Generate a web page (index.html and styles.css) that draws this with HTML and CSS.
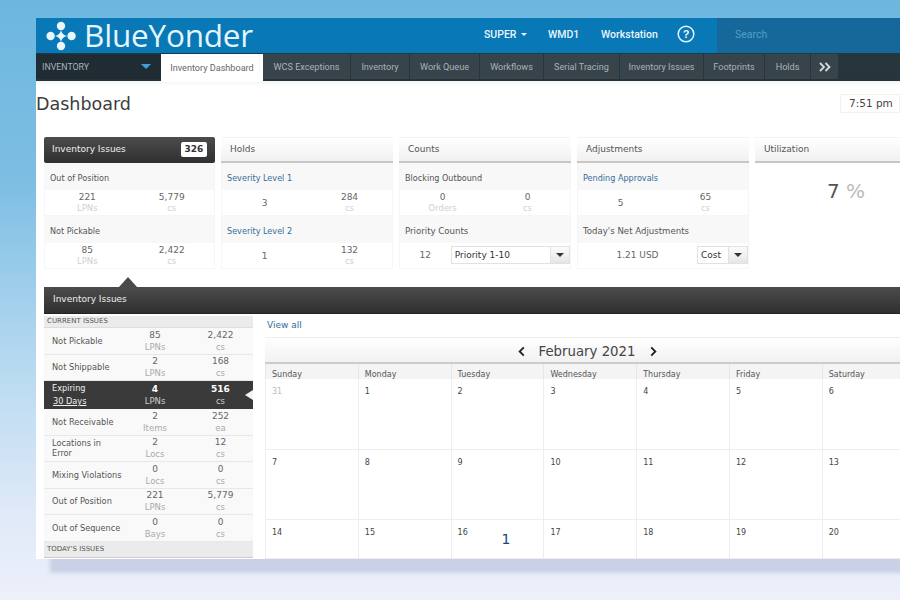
FILE: index.html
```html
<!DOCTYPE html>
<html lang="en">

<head>
    <meta charset="UTF-8" />
    <title>Blue Yonder - Dashboard</title>
    <link rel="stylesheet" href="styles.css">
</head>

<body>
    <div class="app">
        <div class="topbar">
            <svg class="logo-mark" width="30" height="30" viewBox="0 0 30 30">
                <circle cx="15" cy="5" r="4.2" />
                <circle cx="4.6" cy="15" r="4.2" />
                <circle cx="25.6" cy="15" r="4.2" />
                <circle cx="15" cy="25" r="4.2" />
                <path d="M15 9 Q16 14 21 15 Q16 16 15 21 Q14 16 9 15 Q14 14 15 9Z" />
            </svg>
            <span class="logo-text">BlueYonder</span>
            <div class="top-links">
                <span class="top-link top-super">SUPER <i class="caret"></i></span>
                <span class="top-link top-wmd">WMD1</span>
                <span class="top-link top-station">Workstation</span>
                <svg class="help" width="18" height="18" viewBox="0 0 18 18">
                    <circle cx="9" cy="9" r="7.8" />
                    <text x="9" y="13" text-anchor="middle">?</text>
                </svg>
            </div>
            <div class="search">Search</div>
        </div>

        <div class="nav">
            <div class="nav-select">INVENTORY <i class="nav-caret"></i></div>
            <div class="tab tab-active w-dash">Inventory Dashboard</div>
            <div class="tab w-wcs">WCS Exceptions</div>
            <div class="tab w-inv">Inventory</div>
            <div class="tab w-queue">Work Queue</div>
            <div class="tab w-flow">Workflows</div>
            <div class="tab w-serial">Serial Tracing</div>
            <div class="tab w-issues">Inventory Issues</div>
            <div class="tab w-foot">Footprints</div>
            <div class="tab w-holds">Holds</div>
            <div class="tab tab-more w-more">
                <svg width="12" height="10" viewBox="0 0 12 10">
                    <path d="M1 1l4 4-4 4M6.500 1l4 4-4 4" />
                </svg>
            </div>
        </div>

        <div class="title-row">
            <h1>Dashboard</h1>
            <div class="clock">7:51 pm</div>
        </div>

        <div class="tiles">
            <div class="tile">
                <div class="tile-head tile-head-dark">Inventory Issues <span class="count">326</span></div>
                <div class="tile-label">Out of Position</div>
                <div class="tile-values">
                    <div><b>221</b><small>LPNs</small></div>
                    <div><b>5,779</b><small>cs</small></div>
                </div>
                <div class="tile-label">Not Pickable</div>
                <div class="tile-values">
                    <div><b>85</b><small>LPNs</small></div>
                    <div><b>2,422</b><small>cs</small></div>
                </div>
            </div>
            <div class="tile">
                <div class="tile-head">Holds</div>
                <div class="tile-label link">Severity Level 1</div>
                <div class="tile-values">
                    <div><b>3</b></div>
                    <div><b>284</b><small>cs</small></div>
                </div>
                <div class="tile-label link">Severity Level 2</div>
                <div class="tile-values">
                    <div><b>1</b></div>
                    <div><b>132</b><small>cs</small></div>
                </div>
            </div>
            <div class="tile">
                <div class="tile-head">Counts</div>
                <div class="tile-label">Blocking Outbound</div>
                <div class="tile-values">
                    <div><b>0</b><small>Orders</small></div>
                    <div><b>0</b><small>cs</small></div>
                </div>
                <div class="tile-label tile-label-big">Priority Counts</div>
                <div class="tile-values tile-picker">
                    <b class="pick-num">12</b>
                    <div class="picker picker-wide">Priority 1-10 <span class="picker-btn"><i></i></span></div>
                </div>
            </div>
            <div class="tile">
                <div class="tile-head">Adjustments</div>
                <div class="tile-label link">Pending Approvals</div>
                <div class="tile-values">
                    <div><b>5</b></div>
                    <div><b>65</b><small>cs</small></div>
                </div>
                <div class="tile-label tile-label-big">Today's Net Adjustments</div>
                <div class="tile-values tile-picker">
                    <b class="pick-usd">1.21 USD</b>
                    <div class="picker picker-small">Cost <span class="picker-btn"><i></i></span></div>
                </div>
            </div>
            <div class="tile tile-util">
                <div class="tile-head">Utilization</div>
                <div class="util">7 <span>%</span></div>
            </div>
        </div>

        <div class="panel-bar">Inventory Issues</div>

        <div class="panel">
            <div class="issues">
                <div class="section">CURRENT ISSUES</div>
                <div class="issue">
                    <span>Not Pickable</span>
                    <div><b>85</b><small>LPNs</small></div>
                    <div><b>2,422</b><small>cs</small></div>
                </div>
                <div class="issue">
                    <span>Not Shippable</span>
                    <div><b>2</b><small>LPNs</small></div>
                    <div><b>168</b><small>cs</small></div>
                </div>
                <div class="issue issue-active">
                    <span>Expiring<u>30 Days</u></span>
                    <div><b>4</b><small>LPNs</small></div>
                    <div><b>516</b><small>cs</small></div>
                </div>
                <div class="issue">
                    <span>Not Receivable</span>
                    <div><b>2</b><small>Items</small></div>
                    <div><b>252</b><small>ea</small></div>
                </div>
                <div class="issue">
                    <span>Locations in<br>Error</span>
                    <div><b>2</b><small>Locs</small></div>
                    <div><b>12</b><small>cs</small></div>
                </div>
                <div class="issue">
                    <span>Mixing Violations</span>
                    <div><b>0</b><small>Locs</small></div>
                    <div><b>0</b><small>cs</small></div>
                </div>
                <div class="issue">
                    <span>Out of Position</span>
                    <div><b>221</b><small>LPNs</small></div>
                    <div><b>5,779</b><small>cs</small></div>
                </div>
                <div class="issue">
                    <span>Out of Sequence</span>
                    <div><b>0</b><small>Bays</small></div>
                    <div><b>0</b><small>cs</small></div>
                </div>
                <div class="section section-today">TODAY'S ISSUES</div>
            </div>

            <div class="calendar-wrap">
                <div class="view-all">View all</div>
                <div class="cal-head">
                    <svg width="9" height="11" viewBox="0 0 9 12"><path d="M7 1.500L2.500 6 7 10.500" /></svg>
                    <span>February 2021</span>
                    <svg width="9" height="11" viewBox="0 0 9 12"><path d="M2 1.500L6.500 6 2 10.500" /></svg>
                </div>
                <div class="cal-days">
                    <div>Sunday</div><div>Monday</div><div>Tuesday</div><div>Wednesday</div><div>Thursday</div><div>Friday</div><div>Saturday</div>
                </div>
                <div class="cal-grid">
                    <div class="muted">31</div><div>1</div><div>2</div><div>3</div><div>4</div><div>5</div><div>6</div>
                    <div>7</div><div>8</div><div>9</div><div>10</div><div>11</div><div>12</div><div>13</div>
                    <div>14</div><div>15</div><div class="has-count">16<span class="day-count">1</span></div><div>17</div><div>18</div><div>19</div><div>20</div>
                </div>
            </div>
        </div>
    </div>
</body>

</html>
```

FILE: styles.css
```css
* {
    box-sizing: border-box;
    margin: 0;
    padding: 0;
}

body {
    width: 900px;
    height: 600px;
    overflow: hidden;
    padding: 18px 0 0 36px;
    font-family: "DejaVu Sans", sans-serif;
    color: #444;
    background: linear-gradient(to bottom, #6db7df 0%, #7dbee3 30%, #b5d9f0 60%, #dfe9f8 85%, #eef0fb 100%);
}

.app {
    width: 900px;
    height: 541px;
    background: #fff;
    box-shadow: 14px 14px 4px rgba(190, 196, 222, 0.7);
}

/* top bar */
.topbar {
    height: 35px;
    background: #0878b6;
    display: flex;
    align-items: center;
    padding-left: 10px;
    color: #e8f5fb;
}

.logo-mark {
    fill: #e6f6fb;
    flex-shrink: 0;
}

.logo-text {
    font-family: "Open Sans", sans-serif;
    font-size: 31.500px;
    line-height: 33px;
    letter-spacing: -0.2px;
    margin: 0 0 2px 8px;
    width: 400px;
    color: #e4f5fb;
}

.top-links {
    display: flex;
    align-items: center;
    padding-bottom: 3px;
    font-family: "Roboto", sans-serif;
    font-size: 10.500px;
    font-weight: 500;
    color: #e9f6fc;
}

.top-super {
    width: 64px;
}

.top-wmd {
    width: 53px;
}

.top-station {
    width: 76px;
}

.caret {
    display: inline-block;
    width: 0;
    height: 0;
    margin: 0 0 2px 2px;
    border-left: 3.500px solid transparent;
    border-right: 3.500px solid transparent;
    border-top: 3.500px solid #e9f6fc;
}

.help {
    fill: none;
    stroke: #eaf6fc;
    stroke-width: 1.500;
}

.help text {
    fill: #eaf6fc;
    stroke: none;
    font-family: "Liberation Sans", sans-serif;
    font-size: 11px;
    font-weight: bold;
}

.search {
    margin-left: 22px;
    flex: 1;
    height: 35px;
    line-height: 34px;
    padding-left: 18px;
    background: #17689a;
    font-family: "Roboto", sans-serif;
    font-size: 10.500px;
    color: #4f9fc9;
}

/* tabs */
.nav {
    height: 28px;
    display: flex;
    background: #27353d;
    border-top: 1px solid #1d3a4c;
    border-bottom: 2px solid #2b3237;
    font-family: "Roboto", sans-serif;
    font-size: 9.100px;
    color: #a9b3b8;
}

.nav-select {
    width: 125px;
    display: flex;
    justify-content: space-between;
    align-items: center;
    padding: 0 10px 0 6px;
    font-size: 8.800px;
    background: #1f2c34;
}

.nav-caret {
    width: 0;
    height: 0;
    border-left: 5px solid transparent;
    border-right: 5px solid transparent;
    border-top: 5px solid #3f9fd8;
}

.tab {
    display: flex;
    align-items: center;
    justify-content: center;
    background: #37444c;
    margin-right: 1px;
    flex-shrink: 0;
}

.tab-active {
    background: #fff;
    color: #666;
    height: 28px;
}

.w-dash { width: 102px; margin-right: 0; }
.w-wcs { width: 87px; }
.w-inv { width: 58px; }
.w-queue { width: 69px; }
.w-flow { width: 63px; }
.w-serial { width: 75px; }
.w-issues { width: 83px; }
.w-foot { width: 60px; }
.w-holds { width: 45px; }
.w-more { width: 27px; margin-right: 0; }

.tab-more svg {
    fill: none;
    stroke: #d5dbde;
    stroke-width: 1.800;
}

/* title */
.title-row {
    height: 56px;
    display: flex;
    justify-content: space-between;
    padding: 11px 36px 0 0;
    background: linear-gradient(to bottom, #f0f5f7 0, #fff 5px);
}

h1 {
    font-size: 17.500px;
    font-weight: normal;
    line-height: 25px;
    color: #3d3d3d;
}

.clock {
    width: 60px;
    height: 19px;
    margin-top: 2px;
    padding-left: 8px;
    border: 1px solid #f1f1f1;
    font-size: 10.500px;
    line-height: 17px;
    color: #444;
}

/* tiles */
.tiles {
    display: flex;
    gap: 6px;
    padding-left: 8px;
    height: 132px;
    margin-bottom: 18px;
}

.tile {
    width: 172px;
    flex-shrink: 0;
    font-size: 8.100px;
}

.tile:first-child {
    width: 171px;
}

.tile-util {
    width: 145px;
    border-right: none;
}

.tile-head {
    height: 26px;
    line-height: 23px;
    padding-left: 9px;
    font-size: 9px;
    color: #555;
    background: linear-gradient(to bottom, #fff, #f1f1f1);
    border-top: 1px solid #f4f4f4;
    border-bottom: 2px solid #c6c6c6;
}

.tile-head-dark {
    display: flex;
    justify-content: space-between;
    align-items: center;
    padding: 0 8px 1px 8px;
    border: none;
    border-radius: 2px;
    color: #f0f0f0;
    background: linear-gradient(to bottom, #4c4c4c, #2f2f2f);
}

.count {
    width: 26px;
    height: 15px;
    line-height: 15px;
    text-align: center;
    border-radius: 2px;
    font-size: 9px;
    font-weight: bold;
    color: #333;
    background: #fff;
}

.tile-label {
    height: 27px;
    line-height: 30px;
    padding-left: 5px;
    color: #555;
    background: #f8f8f8;
    border-left: 1px solid #f6f6f6;
    border-right: 1px solid #f6f6f6;
}

.tile-label-big {
    font-size: 8.600px;
}

.link {
    color: #336d99;
}

.tile-values {
    height: 26px;
    display: grid;
    grid-template-columns: 1fr 1fr;
    align-items: center;
    padding-top: 1px;
    text-align: center;
    border: 1px solid #f6f6f6;
    border-top: none;
}

b {
    display: block;
    font-weight: normal;
    font-size: 9px;
    line-height: 11px;
    color: #666;
}

small {
    display: block;
    font-size: 8.500px;
    line-height: 11px;
    color: #d0d0d0;
}

.tile-picker {
    display: flex;
    justify-content: flex-start;
    padding: 0 0 1px;
}

.pick-num {
    width: 51px;
}

.pick-usd {
    width: 119px;
}

.picker {
    height: 18px;
    display: flex;
    justify-content: space-between;
    align-items: center;
    padding-left: 3px;
    font-size: 9px;
    color: #333;
    border: 1px solid #e2e2e2;
    background: #fff;
}

.picker-wide {
    width: 120px;
}

.picker-small {
    width: 51px;
}

.picker-btn {
    width: 19px;
    height: 16px;
    display: flex;
    align-items: center;
    justify-content: center;
    background: linear-gradient(to bottom, #fbfbfb, #e6e6e6);
    border-left: 1px solid #e2e2e2;
}

.picker-btn i {
    width: 0;
    height: 0;
    border-left: 4px solid transparent;
    border-right: 4px solid transparent;
    border-top: 4px solid #333;
}

.util {
    padding: 17px 0 0 37px;
    text-align: center;
    font-size: 20px;
    line-height: 22px;
    color: #555;
}

.util span {
    color: #bbb;
    font-size: 20px;
}

/* inventory issues panel */
.panel-bar {
    position: relative;
    height: 27px;
    margin-left: 8px;
    padding-left: 9px;
    line-height: 25px;
    font-size: 9px;
    color: #f0f0f0;
    background: linear-gradient(to bottom, #4c4c4c, #2f2f2f);
    border-bottom: 1px solid #222;
}

.panel-bar::before {
    content: "";
    position: absolute;
    left: 75px;
    top: -10px;
    width: 0;
    height: 0;
    border-left: 9px solid transparent;
    border-right: 9px solid transparent;
    border-bottom: 10px solid #4a4a4a;
}

.panel {
    display: flex;
    height: 245px;
    padding-left: 8px;
}

.issues {
    width: 209px;
    flex-shrink: 0;
    padding-top: 2px;
    font-size: 8.200px;
}

.section {
    height: 12px;
    line-height: 11px;
    padding-left: 3px;
    font-size: 7px;
    color: #555;
    background: #ebebeb;
    border-bottom: 1px solid #ddd;
}

.section-today {
    height: 16px;
    line-height: 15px;
    border-bottom: 1px solid #ccc;
}

.issue {
    height: 26.500px;
    display: grid;
    grid-template-columns: 78px 66px 65px;
    align-items: center;
    text-align: center;
    background: #f9f9f9;
    border-bottom: 1px solid #e8e8e8;
}

.issue b {
    line-height: 12px;
}

.issue small {
    line-height: 12px;
    color: #aaa;
}

.issue span {
    display: block;
    text-align: left;
    padding-left: 8px;
    line-height: 10px;
    white-space: nowrap;
    color: #555;
}

.issue-active {
    position: relative;
    height: 28px;
    background: #3a3a3a;
    border: none;
}

.issue-active span {
    color: #eee;
    line-height: 13px;
}

.issue-active u {
    display: block;
    padding-left: 1px;
}

.issue-active b {
    color: #fff;
    font-weight: bold;
}

.issue-active small {
    color: #ccc;
}

.issue-active::after {
    content: "";
    position: absolute;
    right: 0;
    top: 9px;
    width: 0;
    height: 0;
    border-top: 5px solid transparent;
    border-bottom: 5px solid transparent;
    border-right: 8px solid #f4f4f4;
}

/* calendar */
.calendar-wrap {
    width: 650px;
    flex-shrink: 0;
    margin-left: 12px;
}

.view-all {
    height: 23px;
    padding: 6px 0 0 2px;
    font-size: 9px;
    color: #336d99;
}

.cal-head {
    height: 27px;
    display: flex;
    justify-content: center;
    align-items: center;
    gap: 13px;
    padding: 2px 6px 0 0;
    font-size: 13.300px;
    color: #444;
    background: linear-gradient(to bottom, #fff, #f1f1f1);
    border-top: 1px solid #eee;
    border-bottom: 2px solid #ccc;
}

.cal-head svg {
    fill: none;
    stroke: #222;
    stroke-width: 2;
}

.cal-days {
    height: 15px;
    display: grid;
    grid-template-columns: repeat(7, 92.800px);
    background: #f4f4f4;
    font-size: 8px;
    color: #555;
}

.cal-days div {
    padding: 5px 0 0 6px;
    line-height: 11px;
    border-left: 1px solid #e6e6e6;
}

.cal-grid {
    display: grid;
    grid-template-columns: repeat(7, 92.800px);
    grid-template-rows: 71px 70px 39px;
    font-size: 8px;
    color: #444;
}

.cal-grid div {
    padding: 8px 0 0 6px;
    border-left: 1px solid #eee;
    border-bottom: 1px solid #eee;
}

.cal-grid .muted {
    color: #bbb;
}

.cal-grid .has-count {
    display: flex;
    justify-content: space-between;
}

.day-count {
    width: 42px;
    padding-top: 3px;
    font-size: 14px;
    color: #134a78;
}
```
